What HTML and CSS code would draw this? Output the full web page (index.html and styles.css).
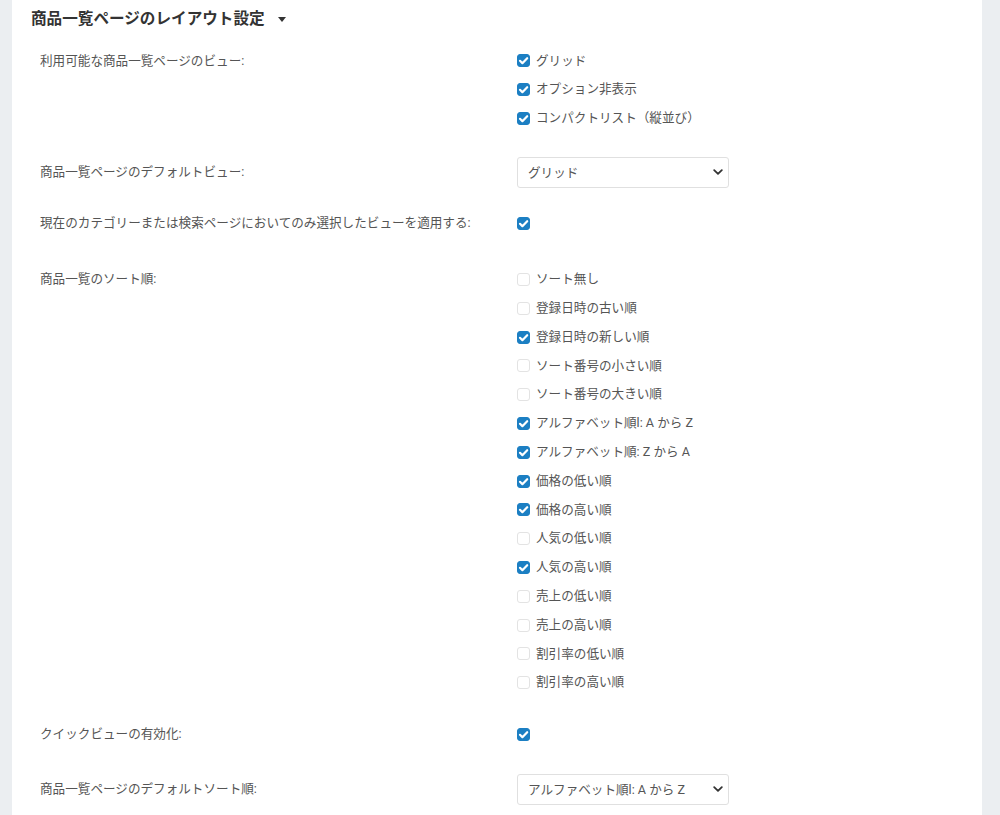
FILE: index.html
```html
<!DOCTYPE html>
<html lang="ja">
<head>
<meta charset="utf-8">
<title>商品一覧ページのレイアウト設定</title>
<link rel="stylesheet" href="styles.css">
</head>
<body>
<div class="panel">
  <h2 class="heading">商品一覧ページのレイアウト設定 <span class="caret"></span></h2>

  <div class="row row-views">
    <div class="label">利用可能な商品一覧ページのビュー:</div>
    <div class="control list">
      <label class="opt"><span class="cb on"><svg viewBox="0 0 13 13"><path d="M3 6.8l2.4 2.4L10.2 4.2" /></svg></span>グリッド</label>
      <label class="opt"><span class="cb on"><svg viewBox="0 0 13 13"><path d="M3 6.8l2.4 2.4L10.2 4.2" /></svg></span>オプション非表示</label>
      <label class="opt"><span class="cb on"><svg viewBox="0 0 13 13"><path d="M3 6.8l2.4 2.4L10.2 4.2" /></svg></span>コンパクトリスト（縦並び）</label>
    </div>
  </div>

  <div class="row row-defview">
    <div class="label">商品一覧ページのデフォルトビュー:</div>
    <div class="control">
      <div class="select"><span>グリッド</span><svg class="chev" viewBox="0 0 10 6"><path d="M1.2 1.2L5 4.8l3.8-3.6" /></svg></div>
    </div>
  </div>

  <div class="row row-apply">
    <div class="label">現在のカテゴリーまたは検索ページにおいてのみ選択したビューを適用する:</div>
    <div class="control list">
      <label class="opt"><span class="cb on"><svg viewBox="0 0 13 13"><path d="M3 6.8l2.4 2.4L10.2 4.2" /></svg></span></label>
    </div>
  </div>

  <div class="row row-sort">
    <div class="label">商品一覧のソート順:</div>
    <div class="control list">
      <label class="opt"><span class="cb"></span>ソート無し</label>
      <label class="opt"><span class="cb"></span>登録日時の古い順</label>
      <label class="opt"><span class="cb on"><svg viewBox="0 0 13 13"><path d="M3 6.8l2.4 2.4L10.2 4.2" /></svg></span>登録日時の新しい順</label>
      <label class="opt"><span class="cb"></span>ソート番号の小さい順</label>
      <label class="opt"><span class="cb"></span>ソート番号の大きい順</label>
      <label class="opt"><span class="cb on"><svg viewBox="0 0 13 13"><path d="M3 6.8l2.4 2.4L10.2 4.2" /></svg></span>アルファベット順l: A から Z</label>
      <label class="opt"><span class="cb on"><svg viewBox="0 0 13 13"><path d="M3 6.8l2.4 2.4L10.2 4.2" /></svg></span>アルファベット順: Z から A</label>
      <label class="opt"><span class="cb on"><svg viewBox="0 0 13 13"><path d="M3 6.8l2.4 2.4L10.2 4.2" /></svg></span>価格の低い順</label>
      <label class="opt"><span class="cb on"><svg viewBox="0 0 13 13"><path d="M3 6.8l2.4 2.4L10.2 4.2" /></svg></span>価格の高い順</label>
      <label class="opt"><span class="cb"></span>人気の低い順</label>
      <label class="opt"><span class="cb on"><svg viewBox="0 0 13 13"><path d="M3 6.8l2.4 2.4L10.2 4.2" /></svg></span>人気の高い順</label>
      <label class="opt"><span class="cb"></span>売上の低い順</label>
      <label class="opt"><span class="cb"></span>売上の高い順</label>
      <label class="opt"><span class="cb"></span>割引率の低い順</label>
      <label class="opt"><span class="cb"></span>割引率の高い順</label>
    </div>
  </div>

  <div class="row row-quick">
    <div class="label">クイックビューの有効化:</div>
    <div class="control list">
      <label class="opt"><span class="cb on"><svg viewBox="0 0 13 13"><path d="M3 6.8l2.4 2.4L10.2 4.2" /></svg></span></label>
    </div>
  </div>

  <div class="row row-defsort">
    <div class="label">商品一覧ページのデフォルトソート順:</div>
    <div class="control">
      <div class="select"><span>アルファベット順l: A から Z</span><svg class="chev" viewBox="0 0 10 6"><path d="M1.2 1.2L5 4.8l3.8-3.6" /></svg></div>
    </div>
  </div>
</div>
</body>
</html>
```

FILE: styles.css
```css
html, body {
  margin: 0;
  padding: 0;
}
body {
  background: #ebeef1;
  font-family: Roboto, "Noto Sans CJK JP", sans-serif;
  color: #555;
  font-size: 12.6px;
  height: 815px;
  overflow: hidden;
}
.panel {
  background: #fff;
  margin-left: 12px;
  width: 970px;
  min-height: 815px;
  padding: 8px 0 0 19px;
  box-sizing: border-box;
}
.heading {
  margin: 0;
  font-size: 15.6px;
  line-height: 22px;
  font-weight: 700;
  color: #333;
  display: flex;
  align-items: center;
}
.caret {
  display: inline-block;
  width: 0;
  height: 0;
  margin-left: 13px;
  border-left: 4px solid transparent;
  border-right: 4px solid transparent;
  border-top: 5px solid #333;
}
.row {
  display: grid;
  grid-template-columns: 477px 212px;
  padding-left: 9px;
}
.label {
  line-height: 20.8px;
  color: #555;
}
.list {
  display: flex;
  flex-direction: column;
  gap: 8px;
}
.opt {
  display: flex;
  align-items: center;
  line-height: 20.8px;
  height: 20.8px;
  color: #555;
}
.cb {
  width: 13px;
  height: 13px;
  box-sizing: border-box;
  border: 1px solid #e3e3e3;
  border-radius: 3px;
  background: #fff;
  margin-right: 6px;
  flex: none;
  display: flex;
}
.cb.on {
  background: #1c7fc3;
  border-color: #1c7fc3;
}
.cb svg {
  width: 13px;
  height: 13px;
  margin: -1px;
}
.cb svg path {
  fill: none;
  stroke: #fff;
  stroke-width: 2.2;
  stroke-linecap: round;
  stroke-linejoin: round;
}
.row-views { margin-top: 20.6px; }
.row-defview { margin-top: 27.6px; align-items: center; }
.row-apply { margin-top: 25.6px; }
.row-sort { margin-top: 35.2px; }
.row-quick { margin-top: 30.6px; }
.row-defsort { margin-top: 29px; align-items: center; }
.select {
  height: 31px;
  box-sizing: border-box;
  border: 1px solid #e0e0e0;
  border-radius: 3px;
  display: flex;
  align-items: center;
  justify-content: space-between;
  padding: 0 5px 2px 10px;
  color: #555;
  background: #fff;
}
.chev {
  width: 10px;
  height: 6px;
  margin-top: 2px;
}
.chev path {
  fill: none;
  stroke: #333;
  stroke-width: 1.8;
  stroke-linecap: round;
  stroke-linejoin: round;
}
```
